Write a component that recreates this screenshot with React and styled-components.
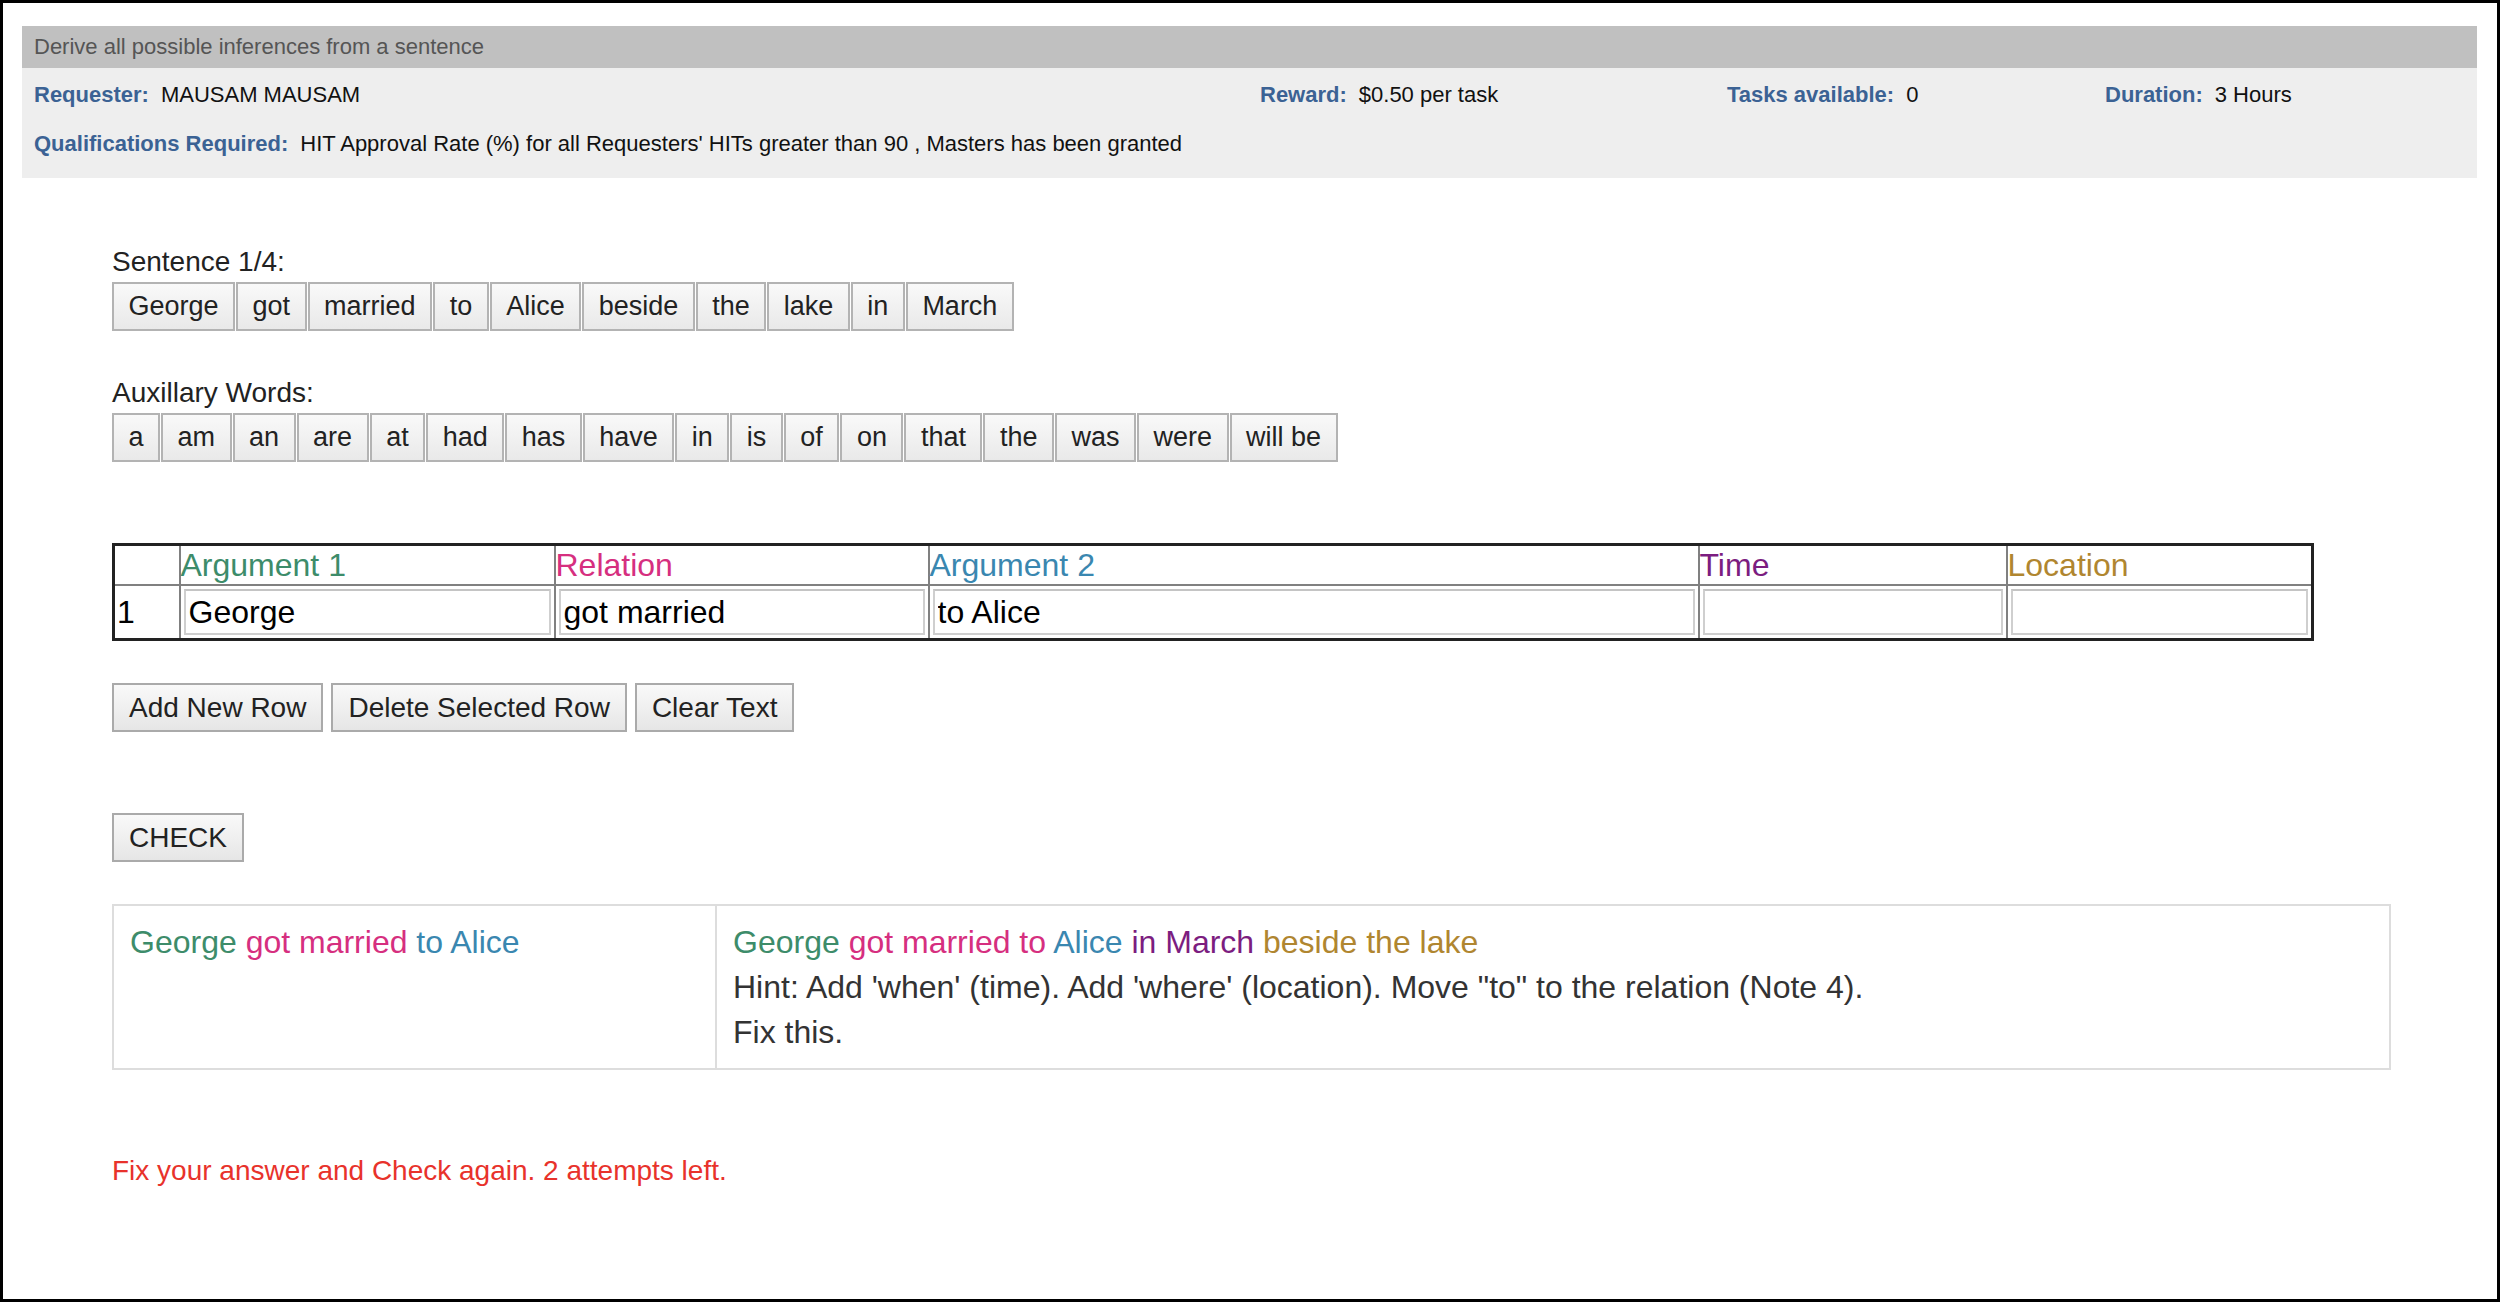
import React from "react";
import styled, { createGlobalStyle } from "styled-components";

const colors = {
  arg1: "#3d8c6a",
  rel: "#d62f7f",
  arg2: "#3a87b0",
  time: "#7c1d80",
  loc: "#b08630",
};

const sentence = ["George", "got", "married", "to", "Alice", "beside", "the", "lake", "in", "March"];
const auxWords = ["a", "am", "an", "are", "at", "had", "has", "have", "in", "is", "of", "on", "that", "the", "was", "were", "will be"];

const columns = [
  { label: "", width: 66 },
  { label: "Argument 1", width: 375, color: colors.arg1, value: "George" },
  { label: "Relation", width: 374, color: colors.rel, value: "got married" },
  { label: "Argument 2", width: 770, color: colors.arg2, value: "to Alice" },
  { label: "Time", width: 308, color: colors.time, value: "" },
  { label: "Location", width: 306, color: colors.loc, value: "" },
];

export default function App() {
  return (
    <Frame>
      <GlobalStyle />
      <TitleBar>Derive all possible inferences from a sentence</TitleBar>
      <InfoPanel>
        <InfoItem>
          <InfoLabel>Requester:</InfoLabel>MAUSAM MAUSAM
        </InfoItem>
        <InfoItem>
          <InfoLabel>Reward:</InfoLabel>$0.50 per task
        </InfoItem>
        <InfoItem>
          <InfoLabel>Tasks available:</InfoLabel>0
        </InfoItem>
        <InfoItem>
          <InfoLabel>Duration:</InfoLabel>3 Hours
        </InfoItem>
        <InfoItem $wide>
          <InfoLabel>Qualifications Required:</InfoLabel>
          HIT Approval Rate (%) for all Requesters' HITs greater than 90 , Masters has been granted
        </InfoItem>
      </InfoPanel>

      <Main>
        <Label>Sentence 1/4:</Label>
        <TokenRow>
          {sentence.map((w, i) => (
            <Token key={i}>{w}</Token>
          ))}
        </TokenRow>

        <Label $top={46}>Auxillary Words:</Label>
        <TokenRow>
          {auxWords.map((w, i) => (
            <Token key={i}>{w}</Token>
          ))}
        </TokenRow>

        <ArgTable>
          <colgroup>
            {columns.map((c, i) => (
              <col key={i} style={{ width: c.width }} />
            ))}
          </colgroup>
          <thead>
            <tr>
              {columns.map((c, i) => (
                <HeadCell key={i} $color={c.color}>
                  {c.label}
                </HeadCell>
              ))}
            </tr>
          </thead>
          <tbody>
            <tr>
              <NumCell>1</NumCell>
              {columns.slice(1).map((c, i) => (
                <InputCell key={i}>
                  <CellInput defaultValue={c.value} />
                </InputCell>
              ))}
            </tr>
          </tbody>
        </ArgTable>

        <ButtonRow>
          <Button>Add New Row</Button>
          <Button>Delete Selected Row</Button>
          <Button>Clear Text</Button>
        </ButtonRow>

        <ButtonRow $top={81}>
          <Button>CHECK</Button>
        </ButtonRow>

        <ResultBox>
          <ResultCell $width={603}>
            <Part $color={colors.arg1}>George</Part> <Part $color={colors.rel}>got married</Part>{" "}
            <Part $color={colors.arg2}>to Alice</Part>
          </ResultCell>
          <ResultCell>
            <div>
              <Part $color={colors.arg1}>George</Part> <Part $color={colors.rel}>got married to</Part>{" "}
              <Part $color={colors.arg2}>Alice</Part> <Part $color={colors.time}>in March</Part>{" "}
              <Part $color={colors.loc}>beside the lake</Part>
            </div>
            <div>Hint: Add 'when' (time). Add 'where' (location). Move "to" to the relation (Note 4).</div>
            <div>Fix this.</div>
          </ResultCell>
        </ResultBox>

        <Warning>Fix your answer and Check again. 2 attempts left.</Warning>
      </Main>
    </Frame>
  );
}

const GlobalStyle = createGlobalStyle`
  html, body {
    margin: 0;
    padding: 0;
    background: #fff;
  }
  body {
    font-family: "Liberation Sans", Arial, Helvetica, sans-serif;
    color: #222;
  }
`;

const Frame = styled.div`
  width: 2500px;
  height: 1302px;
  box-sizing: border-box;
  border: 3px solid #000;
  padding: 23px 20px 0 19px;
  overflow: hidden;
`;

const TitleBar = styled.div`
  height: 42px;
  line-height: 42px;
  background: #c0c0c0;
  color: #555;
  font-size: 22px;
  padding-left: 12px;
`;

const InfoPanel = styled.div`
  background: #eeeeee;
  height: 110px;
  box-sizing: border-box;
  padding: 13px 0 0 12px;
  display: grid;
  grid-template-columns: 1226px 467px 378px 1fr;
  grid-auto-rows: 28px;
  row-gap: 21px;
  font-size: 22px;
  color: #111;
`;

const InfoItem = styled.div`
  line-height: 28px;
  white-space: nowrap;
  grid-column: ${(p) => (p.$wide ? "1 / -1" : "auto")};
`;

const InfoLabel = styled.span`
  color: #3b6294;
  font-weight: bold;
  margin-right: 12px;
`;

const Main = styled.div`
  padding: 68px 0 0 90px;
`;

const Label = styled.div`
  font-size: 28px;
  line-height: 32px;
  color: #222;
  margin-top: ${(p) => (p.$top ? p.$top : 0)}px;
`;

const TokenRow = styled.div`
  display: flex;
  gap: 1px;
  margin-top: 4px;
`;

const Token = styled.div`
  font-size: 27px;
  line-height: 33px;
  padding: 6px 14.5px;
  border: 2px solid #b3b3b3;
  background: linear-gradient(#f9f9f9, #e9e9e9);
  color: #222;
  white-space: nowrap;
`;

const ArgTable = styled.table`
  margin-top: 81px;
  width: 2199px;
  table-layout: fixed;
  border-collapse: collapse;
  border: 3px solid #222;
`;

const HeadCell = styled.th`
  border: 2px solid #808080;
  padding: 0;
  height: 38px;
  text-align: left;
  font-weight: normal;
  font-size: 32px;
  line-height: 38px;
  color: ${(p) => p.$color || "#000"};
`;

const NumCell = styled.td`
  border: 2px solid #808080;
  padding: 0 0 0 2px;
  font-size: 32px;
  color: #000;
`;

const InputCell = styled.td`
  border: 2px solid #808080;
  padding: 3px;
`;

const CellInput = styled.input`
  display: block;
  width: 100%;
  height: 46px;
  box-sizing: border-box;
  border: 2px solid #cfcfcf;
  border-top-color: #c4c4c4;
  padding: 0 3px;
  margin: 0;
  font-family: "Liberation Sans", Arial, Helvetica, sans-serif;
  font-size: 32px;
  color: #000;
  background: #fff;
  outline: none;
`;

const ButtonRow = styled.div`
  display: flex;
  gap: 8px;
  margin-top: ${(p) => (p.$top ? p.$top : 42)}px;
`;

const Button = styled.button`
  height: 49px;
  padding: 0 15px;
  border: 2px solid #aaaaaa;
  background: linear-gradient(#f9f9f9, #e6e6e6);
  font-family: "Liberation Sans", Arial, Helvetica, sans-serif;
  font-size: 28px;
  color: #222;
  border-radius: 0;
`;

const ResultBox = styled.div`
  margin-top: 42px;
  width: 2279px;
  height: 166px;
  box-sizing: border-box;
  border: 2px solid #dddddd;
  display: flex;
`;

const ResultCell = styled.div`
  box-sizing: border-box;
  flex: ${(p) => (p.$width ? `0 0 ${p.$width}px` : "1")};
  border-right: ${(p) => (p.$width ? "2px solid #dddddd" : "none")};
  padding: 14px 16px 12px;
  font-size: 32px;
  line-height: 45px;
  color: #333;
`;

const Part = styled.span`
  color: ${(p) => p.$color};
`;

const Warning = styled.div`
  margin-top: 85px;
  font-size: 28px;
  line-height: 32px;
  color: #e8322b;
`;
